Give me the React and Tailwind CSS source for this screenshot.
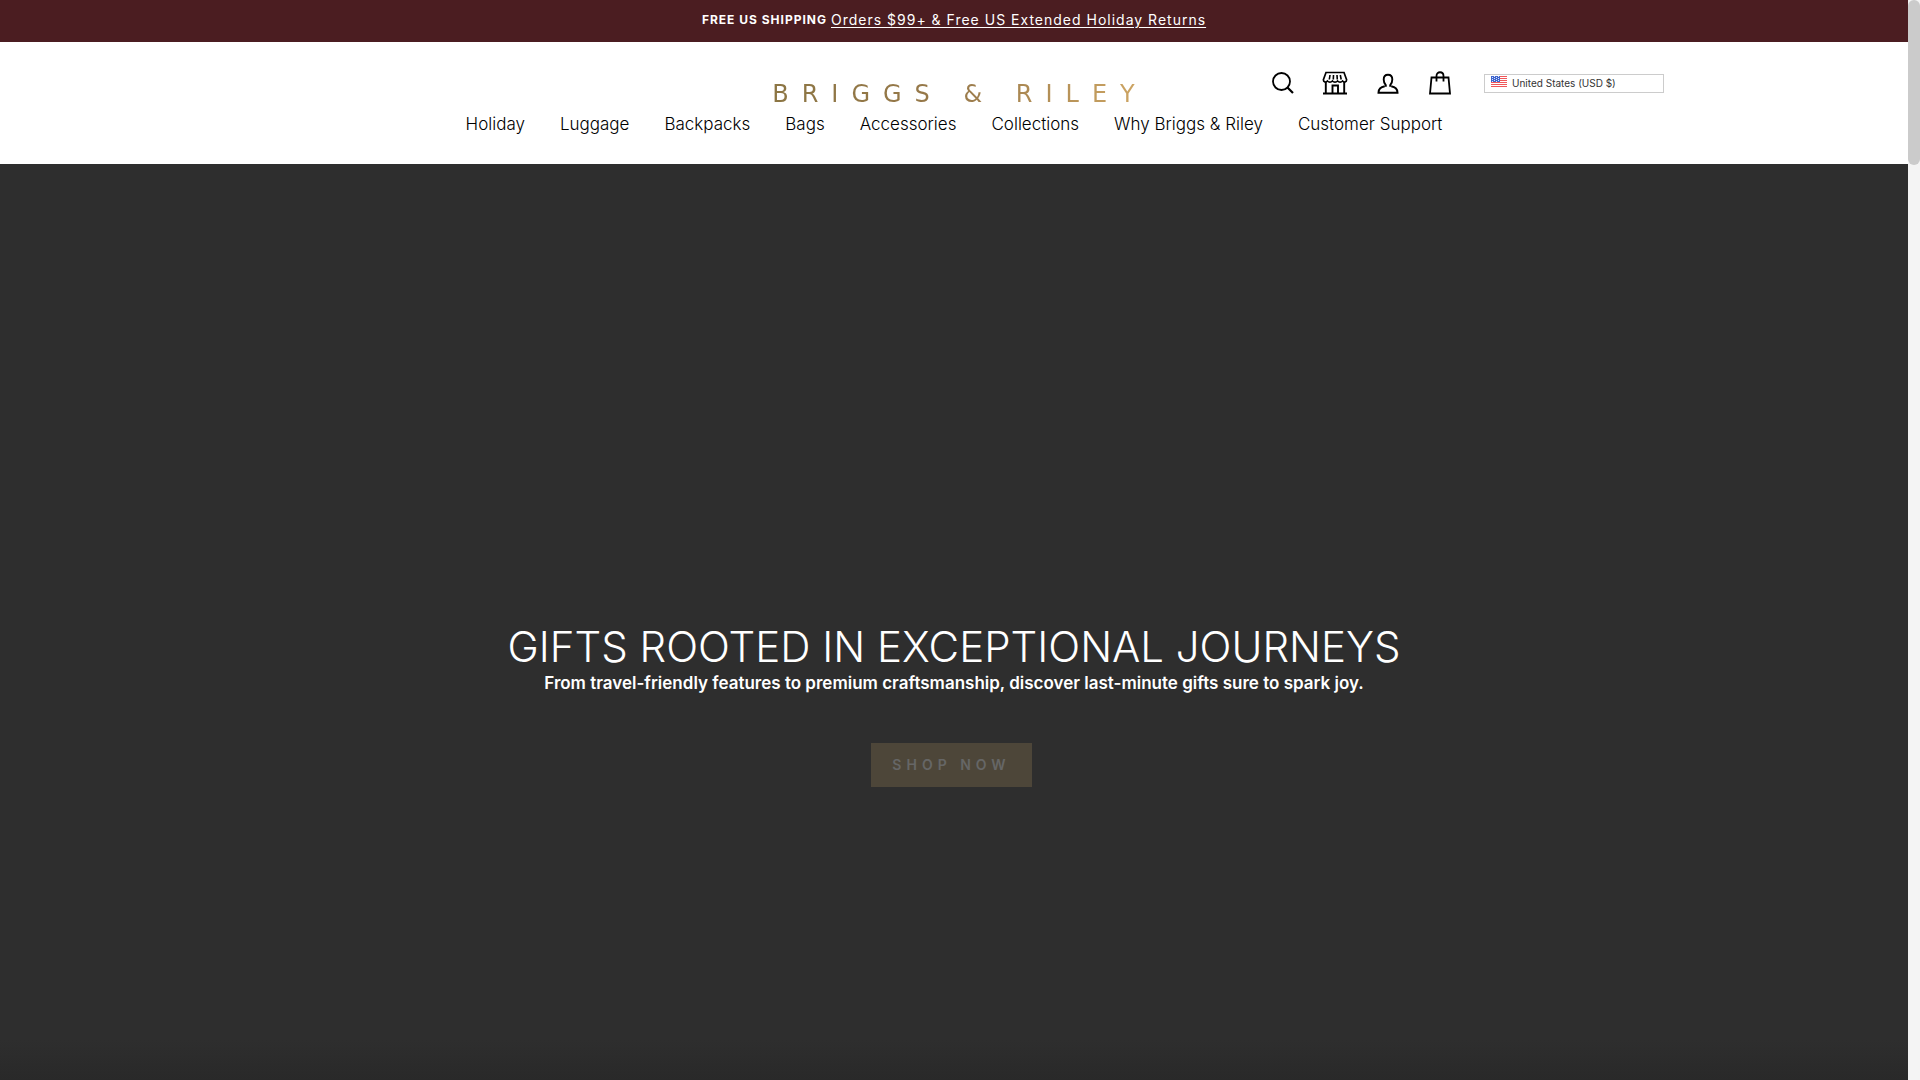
const navItems = [
  'Holiday',
  'Luggage',
  'Backpacks',
  'Bags',
  'Accessories',
  'Collections',
  'Why Briggs & Riley',
  'Customer Support',
];

const iconProps = {
  fill: 'none',
  stroke: '#000',
  strokeWidth: 2,
  'aria-hidden': true,
};

function SearchIcon() {
  return (
    <svg {...iconProps} width="22" height="24" viewBox="0 0 22 24">
      <circle cx="9.5" cy="10.5" r="8.5" strokeWidth="1.8" />
      <path d="M15.500 16.500 21 22" strokeWidth="2.2" />
    </svg>
  );
}

function StoreIcon() {
  return (
    <svg {...iconProps} width="26" height="24" viewBox="0 0 26 24">
      <path d="M4 1.5h18l2.6 7.200c0 2.400-2.400 3-4 1.300-1.400 1.600-3.600 1.600-5 0-1.400 1.600-3.800 1.600-5.200 0-1.400 1.600-3.600 1.600-5 0-1.600 1.700-4 1.100-4-1.300z" strokeWidth="1.7" />
      <path d="M8 4 7.300 8.500M11.500 4l-.2 4.500M15 4l.3 4.500M18.300 4l.9 4.500" strokeWidth="1.6" />
      <path d="M3.800 11v11M22.200 11v11M1 22.500h24" strokeWidth="1.9" />
      <path d="M10.500 22v-7.500h5.500V22" strokeWidth="1.9" />
    </svg>
  );
}

function AccountIcon() {
  return (
    <svg {...iconProps} width="24" height="24" viewBox="-1 -2 24 24">
      <path d="M7.800 13.300C3.800 14 1.500 15.800 1.500 19.800h19c0-4-2.300-5.800-6.300-6.500" />
      <path d="M11 1.800c-3 0-4.300 2-4.300 4.700 0 2.300.7 4.200 2.100 5.700v1.600M13.200 13.800v-1.600c1.400-1.500 2.100-3.400 2.100-5.700 0-2.700-1.300-4.700-4.300-4.700" strokeWidth="1.9" />
    </svg>
  );
}

function BagIcon() {
  return (
    <svg {...iconProps} width="24" height="24" viewBox="-1 0 24 24">
      <path d="M2.500 6.500h17L21 22.500H1z" strokeWidth="1.8" />
      <path d="M7.500 10.500V5c0-5 7-5 7 0v5.500" strokeWidth="1.8" />
    </svg>
  );
}

function Flag() {
  return (
    <svg width="16" height="11" viewBox="0 0 16 11" aria-hidden="true">
      <rect width="16" height="11" fill="#fff" />
      {[0, 2, 4, 6, 8, 10].map((y) => (
        <rect key={y} y={y} width="16" height="1" fill="#f0575a" />
      ))}
      <rect width="9" height="6" fill="#3f66cf" />
      {[1, 3, 5].map((y) =>
        [1, 3, 5, 7].map((x) => (
          <rect key={`${x}-${y}`} x={x} y={y - (x % 4 === 1 ? 0 : 1)} width="1" height="1" fill="#dbe4fa" />
        )),
      )}
    </svg>
  );
}

function Announcement() {
  return (
    <div className="flex h-[42px] items-center justify-center gap-1 bg-[#4b1d21] pb-0.5 leading-5 text-white">
      <strong className="text-[12px] font-bold tracking-[1px]">FREE US SHIPPING</strong>
      <a href="#shipping" className="text-[14px] tracking-[1px] underline underline-offset-2">
        Orders $99+ &amp; Free US Extended Holiday Returns
      </a>
    </div>
  );
}

function Header() {
  return (
    <header className="bg-white px-4 pt-4 pb-7 text-black">
      <div className="mx-auto grid max-w-[1420px] grid-cols-[1fr_auto_1fr] items-start">
        <span />
        <a
          href="#home"
          className="bg-gradient-to-r from-[#8b7543] via-[#98794a] to-[#d0a764] bg-clip-text pt-5 pb-0.5 pl-3 font-['DejaVu_Sans',sans-serif] text-[24px] leading-8 tracking-[13px] text-transparent"
        >
          BRIGGS &amp; RILEY
        </a>
        <div className="flex items-center justify-end pt-[13px]">
          <div className="mr-8 flex items-center gap-7">
            <button type="button" aria-label="Search"><SearchIcon /></button>
            <a href="#stores" aria-label="Store locator"><StoreIcon /></a>
            <a href="#account" aria-label="Account"><AccountIcon /></a>
            <a href="#cart" aria-label="Cart"><BagIcon /></a>
          </div>
          <div className="relative">
            <select
              aria-label="Country"
              className="block h-[19px] w-[180px] appearance-none border border-[#ccc] bg-white pl-[27px] text-[10px] leading-4 text-[#333]"
            >
              <option>United States (USD $)</option>
            </select>
            <span className="pointer-events-none absolute top-0.5 left-[7px]"><Flag /></span>
          </div>
        </div>
      </div>
      <nav aria-label="Main" className="flex flex-wrap justify-center gap-x-[35px] text-[17px] leading-6 font-light">
        {navItems.map((item) => (
          <a key={item} href="#menu">{item}</a>
        ))}
      </nav>
    </header>
  );
}

function Hero() {
  return (
    <section className="flex flex-1 flex-col items-center justify-end bg-[#2e2e2e] bg-[linear-gradient(to_top,#292929,#2e2e2e_40px)] px-4 pb-[293px] text-center text-white">
      <h1 className="text-[42px] leading-[48px] font-light">GIFTS ROOTED IN EXCEPTIONAL JOURNEYS</h1>
      <p className="text-[17px] leading-6 font-semibold">
        From travel-friendly features to premium craftsmanship, discover last-minute gifts sure to spark joy.
      </p>
      <a
        href="#shop"
        className="mt-12 mr-[5px] flex h-11 w-[161px] items-center justify-center bg-[#4d4639] pb-0.5 text-[14px] font-semibold tracking-[5px] text-[#666]"
      >
        SHOP NOW
      </a>
    </section>
  );
}

export default function App() {
  return (
    <div className="flex min-h-screen font-['Inter',sans-serif]">
      <main className="flex min-w-0 flex-1 flex-col">
        <Announcement />
        <Header />
        <Hero />
      </main>
      <div className="w-3 bg-[#f4f4f4]">
        <div className="h-[165px] rounded-full bg-[#cbcbcb]" />
      </div>
    </div>
  );
}
